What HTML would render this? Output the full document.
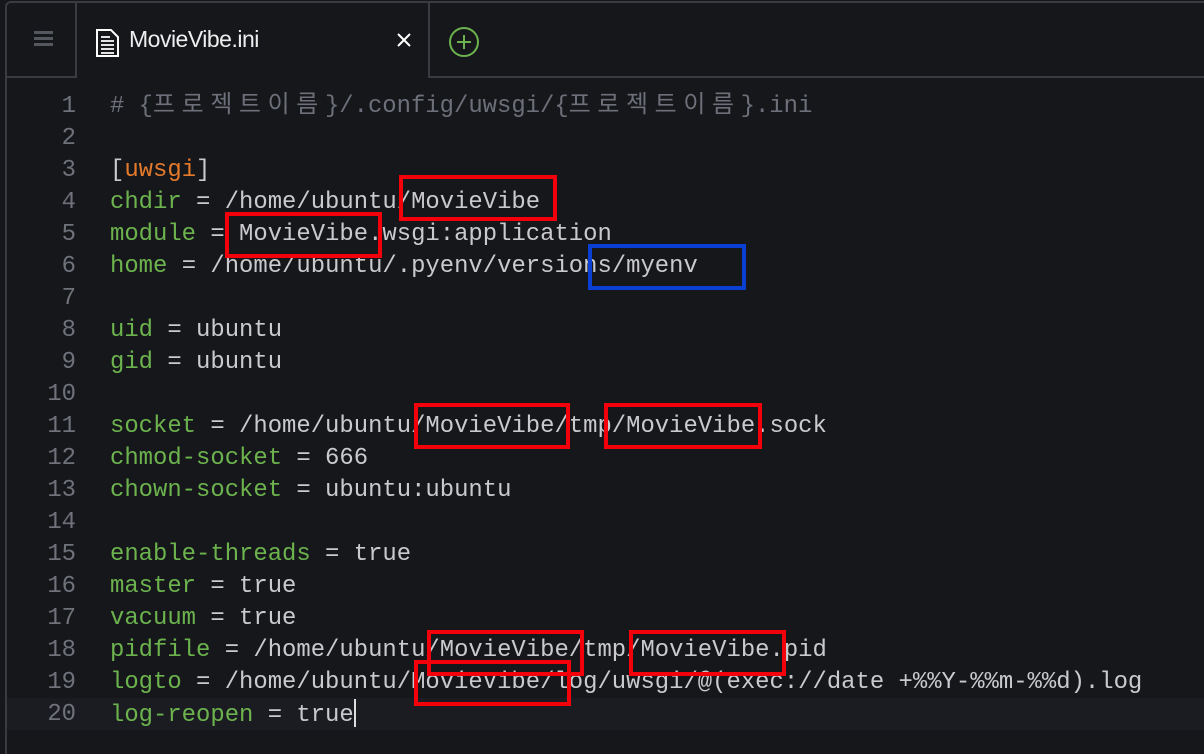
<!DOCTYPE html>
<html><head><meta charset="utf-8"><style>
html,body{margin:0;padding:0;background:#16171b;width:1204px;height:754px;overflow:hidden;position:relative}
.frame{position:absolute;left:5px;top:1px;width:1199px;height:753px;border:2px solid #3a3b41;border-right:none;border-bottom:none;border-radius:6px 0 0 0;box-sizing:border-box}
.ln{position:absolute;background:#3a3b41}
.code{position:absolute;left:0;top:91px;width:1204px;font-family:"Liberation Mono","Noto Sans CJK KR",monospace;font-size:23.9px;line-height:32px;color:#c9c9ce}
.row{height:32px;position:relative;white-space:pre}
.num{position:absolute;left:0;width:76px;color:#70727b;text-align:right}
.txt{position:absolute;left:110px}
.k{color:#6cb34e}.c{color:#6d707a}.o{color:#e47a2c}
.kr{display:inline-block;width:28.67px;text-align:left}
.box{position:absolute;border:4px solid #f4000a;box-sizing:border-box}
.blue{border-color:#0a3fd4}
</style></head><body>
<div style="position:absolute;left:7px;top:698px;width:1197px;height:32px;background:#1b1c21"></div>
<div class="frame"></div>
<div class="ln" style="left:75px;top:1px;width:2px;height:77px"></div>
<div class="ln" style="left:428px;top:1px;width:2px;height:77px"></div>
<div class="ln" style="left:5px;top:76px;width:72px;height:2px"></div>
<div class="ln" style="left:428px;top:76px;width:776px;height:2px"></div>
<div style="position:absolute;left:34px;top:31px;width:19px;height:3px;background:#55575e;box-shadow:0 6px 0 #55575e,0 12px 0 #55575e"></div>
<svg style="position:absolute;left:95px;top:28px" width="26" height="30" viewBox="0 0 26 30"><path d="M2 2h14l7 7v19H2z" fill="none" stroke="#fff" stroke-width="2"/><path d="M6 13h13M6 17h13M6 21h13M6 25h13M6 9h9" stroke="#fff" stroke-width="1.8"/></svg>
<div style="position:absolute;left:129px;top:26px;font-family:'Liberation Sans',sans-serif;font-size:23px;color:#eee;letter-spacing:-0.5px">MovieVibe.ini</div>
<svg style="position:absolute;left:397px;top:33px" width="14" height="14"><path d="M1 1L13 13M13 1L1 13" stroke="#fff" stroke-width="2"/></svg>
<svg style="position:absolute;left:448px;top:26px" width="32" height="32"><circle cx="16" cy="16" r="14" fill="none" stroke="#6cb34e" stroke-width="2"/><path d="M16 9v14M9 16h14" stroke="#6cb34e" stroke-width="2"/></svg>
<div class="code"><div class="row"><span class="num">1</span><span class="txt c"># {<span class="kr">프</span><span class="kr">로</span><span class="kr">젝</span><span class="kr">트</span><span class="kr">이</span><span class="kr">름</span>}/.config/uwsgi/{<span class="kr">프</span><span class="kr">로</span><span class="kr">젝</span><span class="kr">트</span><span class="kr">이</span><span class="kr">름</span>}.ini</span></div><div class="row"><span class="num">2</span></div><div class="row"><span class="num">3</span><span class="txt">[<span class="o">uwsgi</span>]</span></div><div class="row"><span class="num">4</span><span class="txt"><span class="k">chdir</span> = /home/ubuntu/MovieVibe</span></div><div class="row"><span class="num">5</span><span class="txt"><span class="k">module</span> = MovieVibe.wsgi:application</span></div><div class="row"><span class="num">6</span><span class="txt"><span class="k">home</span> = /home/ubuntu/.pyenv/versions/myenv</span></div><div class="row"><span class="num">7</span></div><div class="row"><span class="num">8</span><span class="txt"><span class="k">uid</span> = ubuntu</span></div><div class="row"><span class="num">9</span><span class="txt"><span class="k">gid</span> = ubuntu</span></div><div class="row"><span class="num">10</span></div><div class="row"><span class="num">11</span><span class="txt"><span class="k">socket</span> = /home/ubuntu/MovieVibe/tmp/MovieVibe.sock</span></div><div class="row"><span class="num">12</span><span class="txt"><span class="k">chmod-socket</span> = 666</span></div><div class="row"><span class="num">13</span><span class="txt"><span class="k">chown-socket</span> = ubuntu:ubuntu</span></div><div class="row"><span class="num">14</span></div><div class="row"><span class="num">15</span><span class="txt"><span class="k">enable-threads</span> = true</span></div><div class="row"><span class="num">16</span><span class="txt"><span class="k">master</span> = true</span></div><div class="row"><span class="num">17</span><span class="txt"><span class="k">vacuum</span> = true</span></div><div class="row"><span class="num">18</span><span class="txt"><span class="k">pidfile</span> = /home/ubuntu/MovieVibe/tmp/MovieVibe.pid</span></div><div class="row"><span class="num">19</span><span class="txt"><span class="k">logto</span> = /home/ubuntu/MovieVibe/log/uwsgi/@(exec://date +%%Y-%%m-%%d).log</span></div><div class="row"><span class="num">20</span><span class="txt"><span class="k">log-reopen</span> = true<span style="display:inline-block;width:2px;height:28px;background:#ddd;vertical-align:-6px"></span></span></div></div>
<div class="box" style="left:399px;top:175px;width:158px;height:46px"></div>
<div class="box" style="left:225px;top:212px;width:157px;height:46px"></div>
<div class="box blue" style="left:588px;top:244px;width:158px;height:46px"></div>
<div class="box" style="left:414px;top:403px;width:156px;height:46px"></div>
<div class="box" style="left:604px;top:403px;width:158px;height:46px"></div>
<div class="box" style="left:427px;top:630px;width:157px;height:46px"></div>
<div class="box" style="left:629px;top:630px;width:157px;height:46px"></div>
<div class="box" style="left:414px;top:660px;width:157px;height:46px"></div>
</body></html>
